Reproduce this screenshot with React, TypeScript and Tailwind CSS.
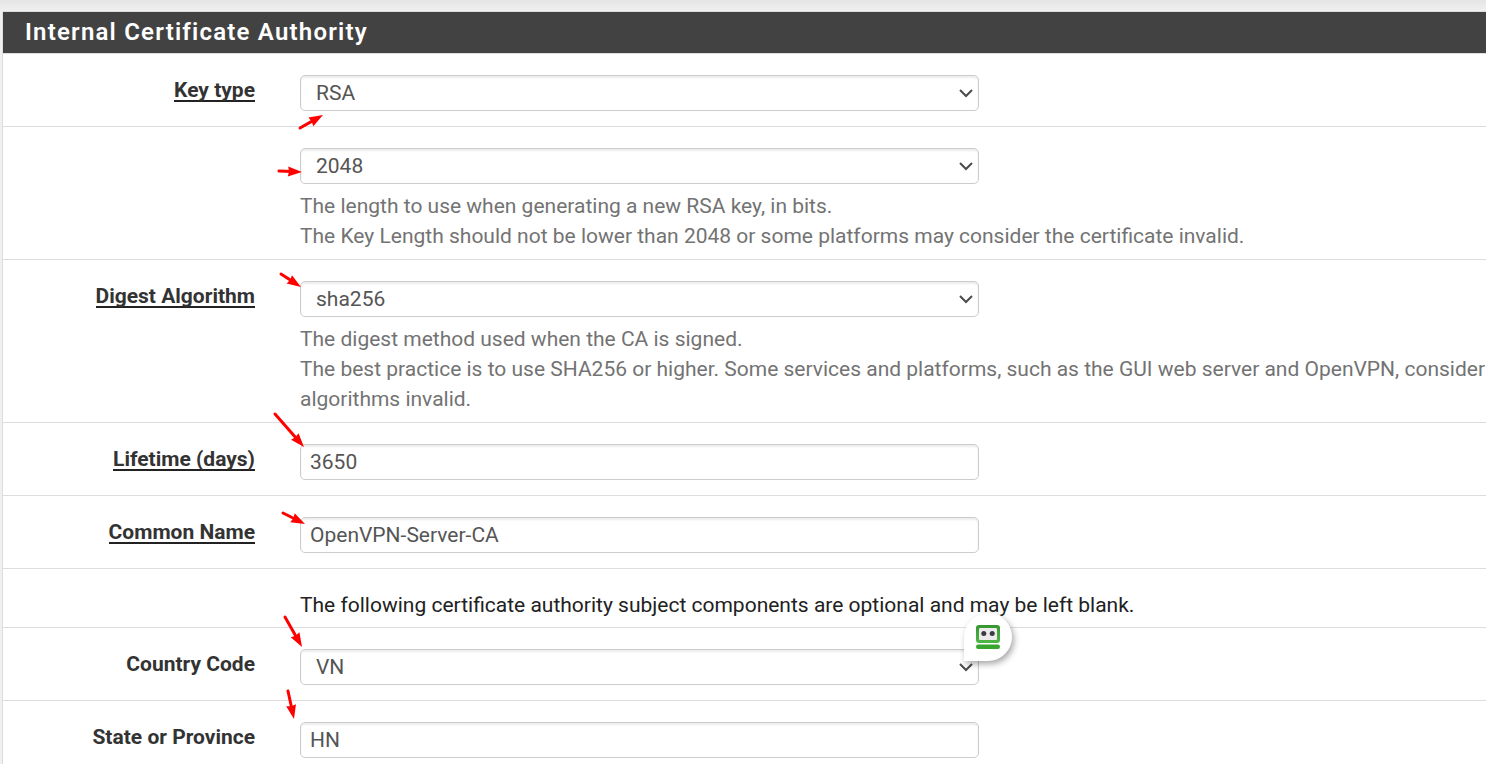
import type { ReactNode } from 'react';

type Arrow = { from: [number, number]; to: [number, number] };

const arrows: Arrow[] = [
  { from: [300, 128], to: [323, 115] },
  { from: [279, 171], to: [302, 172] },
  { from: [281, 274], to: [301, 287] },
  { from: [275, 414], to: [304, 447] },
  { from: [283, 513], to: [305, 524] },
  { from: [285, 617], to: [302, 647] },
  { from: [288, 691], to: [294, 719] },
];

function ArrowMark({ from, to }: Arrow) {
  const dx = to[0] - from[0];
  const dy = to[1] - from[1];
  const length = Math.hypot(dx, dy);
  const angle = (Math.atan2(dy, dx) * 180) / Math.PI;
  return (
    <g transform={`translate(${to[0]} ${to[1]}) rotate(${angle})`}>
      <path d={`M${-length} 0H-10`} stroke="#ff0000" strokeWidth="3" strokeLinecap="round" />
      <path d="M0 0L-14 -5L-13 0L-14 5Z" fill="#ff0000" />
    </g>
  );
}

const controlClass =
  'block h-9 w-full rounded-[5px] border border-[#cccccc] bg-white font-[inherit] text-[#555555] shadow-[inset_0_2px_2px_rgba(0,0,0,0.075)] outline-none';

function Row({ id, label, required, tight, children }: {
  id?: string;
  label?: string;
  required?: boolean;
  tight?: boolean;
  children: ReactNode;
}) {
  return (
    <div className={`flex border-b border-[#dddddd] pt-[21px] ${tight ? 'pb-[7px]' : 'pb-[15px]'}`}>
      <div className="w-[252px] shrink-0 text-right font-bold text-[#333333]">
        {label && (
          <label htmlFor={id} className={required ? 'inline-block h-[27px] border-b-2 border-[#222222]' : ''}>
            {label}
          </label>
        )}
      </div>
      <div className="ml-[45px] min-w-0 flex-1">{children}</div>
    </div>
  );
}

function Select({ id, value, name, children }: { id: string; value: string; name?: string; children?: ReactNode }) {
  return (
    <div className="relative w-full max-w-[679px]">
      <select id={id} aria-label={name} defaultValue={value} className={`${controlClass} appearance-none pr-10 pl-[15px]`}>
        <option>{value}</option>
      </select>
      <svg className="pointer-events-none absolute top-[14px] right-[6px]" width="14" height="10" viewBox="0 0 14 10" fill="none" aria-hidden="true">
        <path d="M1 1L7 7L13 1" stroke="#4b4b4b" strokeWidth="2" />
      </svg>
      {children}
    </div>
  );
}

function TextBox({ id, value }: { id: string; value: string }) {
  return <input id={id} type="text" defaultValue={value} className={`${controlClass} max-w-[679px] px-[9px]`} />;
}

function Help({ children }: { children: ReactNode }) {
  return <p className="pt-[7px] -mb-[7px] whitespace-nowrap text-[#737373]">{children}</p>;
}

function FormFillerBadge() {
  return (
    <button
      type="button"
      aria-label="Fill form"
      className="absolute -top-9 -right-[33px] flex size-12 items-center justify-center rounded-full rounded-bl-[3px] bg-white shadow-[2px_3px_6px_rgba(0,0,0,0.35)]"
    >
      <svg width="24" height="24" viewBox="0 0 24 24" aria-hidden="true">
        <defs>
          <linearGradient id="frame" x1="0" y1="0" x2="0" y2="1">
            <stop offset="0" stopColor="#35962f" />
            <stop offset="1" stopColor="#50b847" />
          </linearGradient>
        </defs>
        <rect width="24" height="18" rx="3" fill="url(#frame)" />
        <rect x="3" y="3" width="18" height="12" rx="1" fill="#ebebed" />
        <circle cx="7.8" cy="8.5" r="2.5" fill="#3a3a42" />
        <circle cx="16.2" cy="8.5" r="2.5" fill="#3a3a42" />
        <rect y="19.5" width="24" height="4.5" rx="2.2" fill="#38a52e" />
      </svg>
    </button>
  );
}

export default function App() {
  return (
    <main className="relative h-screen overflow-hidden bg-[#f0f0f0] font-[Roboto,sans-serif] text-[21px] leading-[30px] text-[#212121]">
      <div className="h-[11px] bg-linear-to-b from-[#e5e5e5] to-[#f0f0f0]" />
      <section className="ml-[2px] border-t border-l border-[#dddddd] bg-white">
        <header className="border-b border-[#dddddd] bg-[#424242] px-[22px] pt-[5px] pb-[6px]">
          <h2 className="text-[24px] font-semibold tracking-wider text-white">Internal Certificate Authority</h2>
        </header>
        <form>
          <Row id="keytype" label="Key type" required>
            <Select id="keytype" value="RSA" />
          </Row>
          <Row>
            <Select id="keylen" name="Key length" value="2048" />
            <Help>
              The length to use when generating a new RSA key, in bits.
              <br />
              The Key Length should not be lower than 2048 or some platforms may consider the certificate invalid.
            </Help>
          </Row>
          <Row id="digest" label="Digest Algorithm" required>
            <Select id="digest" value="sha256" />
            <Help>
              The digest method used when the CA is signed.
              <br />
              The best practice is to use SHA256 or higher. Some services and platforms, such as the GUI web server and OpenVPN, consider
              <br />
              algorithms invalid.
            </Help>
          </Row>
          <Row id="lifetime" label="Lifetime (days)" required>
            <TextBox id="lifetime" value="3650" />
          </Row>
          <Row id="cn" label="Common Name" required>
            <TextBox id="cn" value="OpenVPN-Server-CA" />
          </Row>
          <Row tight>
            <p>The following certificate authority subject components are optional and may be left blank.</p>
          </Row>
          <Row id="country" label="Country Code">
            <Select id="country" value="VN">
              <FormFillerBadge />
            </Select>
          </Row>
          <Row id="state" label="State or Province">
            <TextBox id="state" value="HN" />
          </Row>
        </form>
      </section>
      <svg className="pointer-events-none absolute top-0 left-0" width="340" height="764" fill="none" aria-hidden="true">
        {arrows.map((arrow) => (
          <ArrowMark key={arrow.to.join()} {...arrow} />
        ))}
      </svg>
    </main>
  );
}
